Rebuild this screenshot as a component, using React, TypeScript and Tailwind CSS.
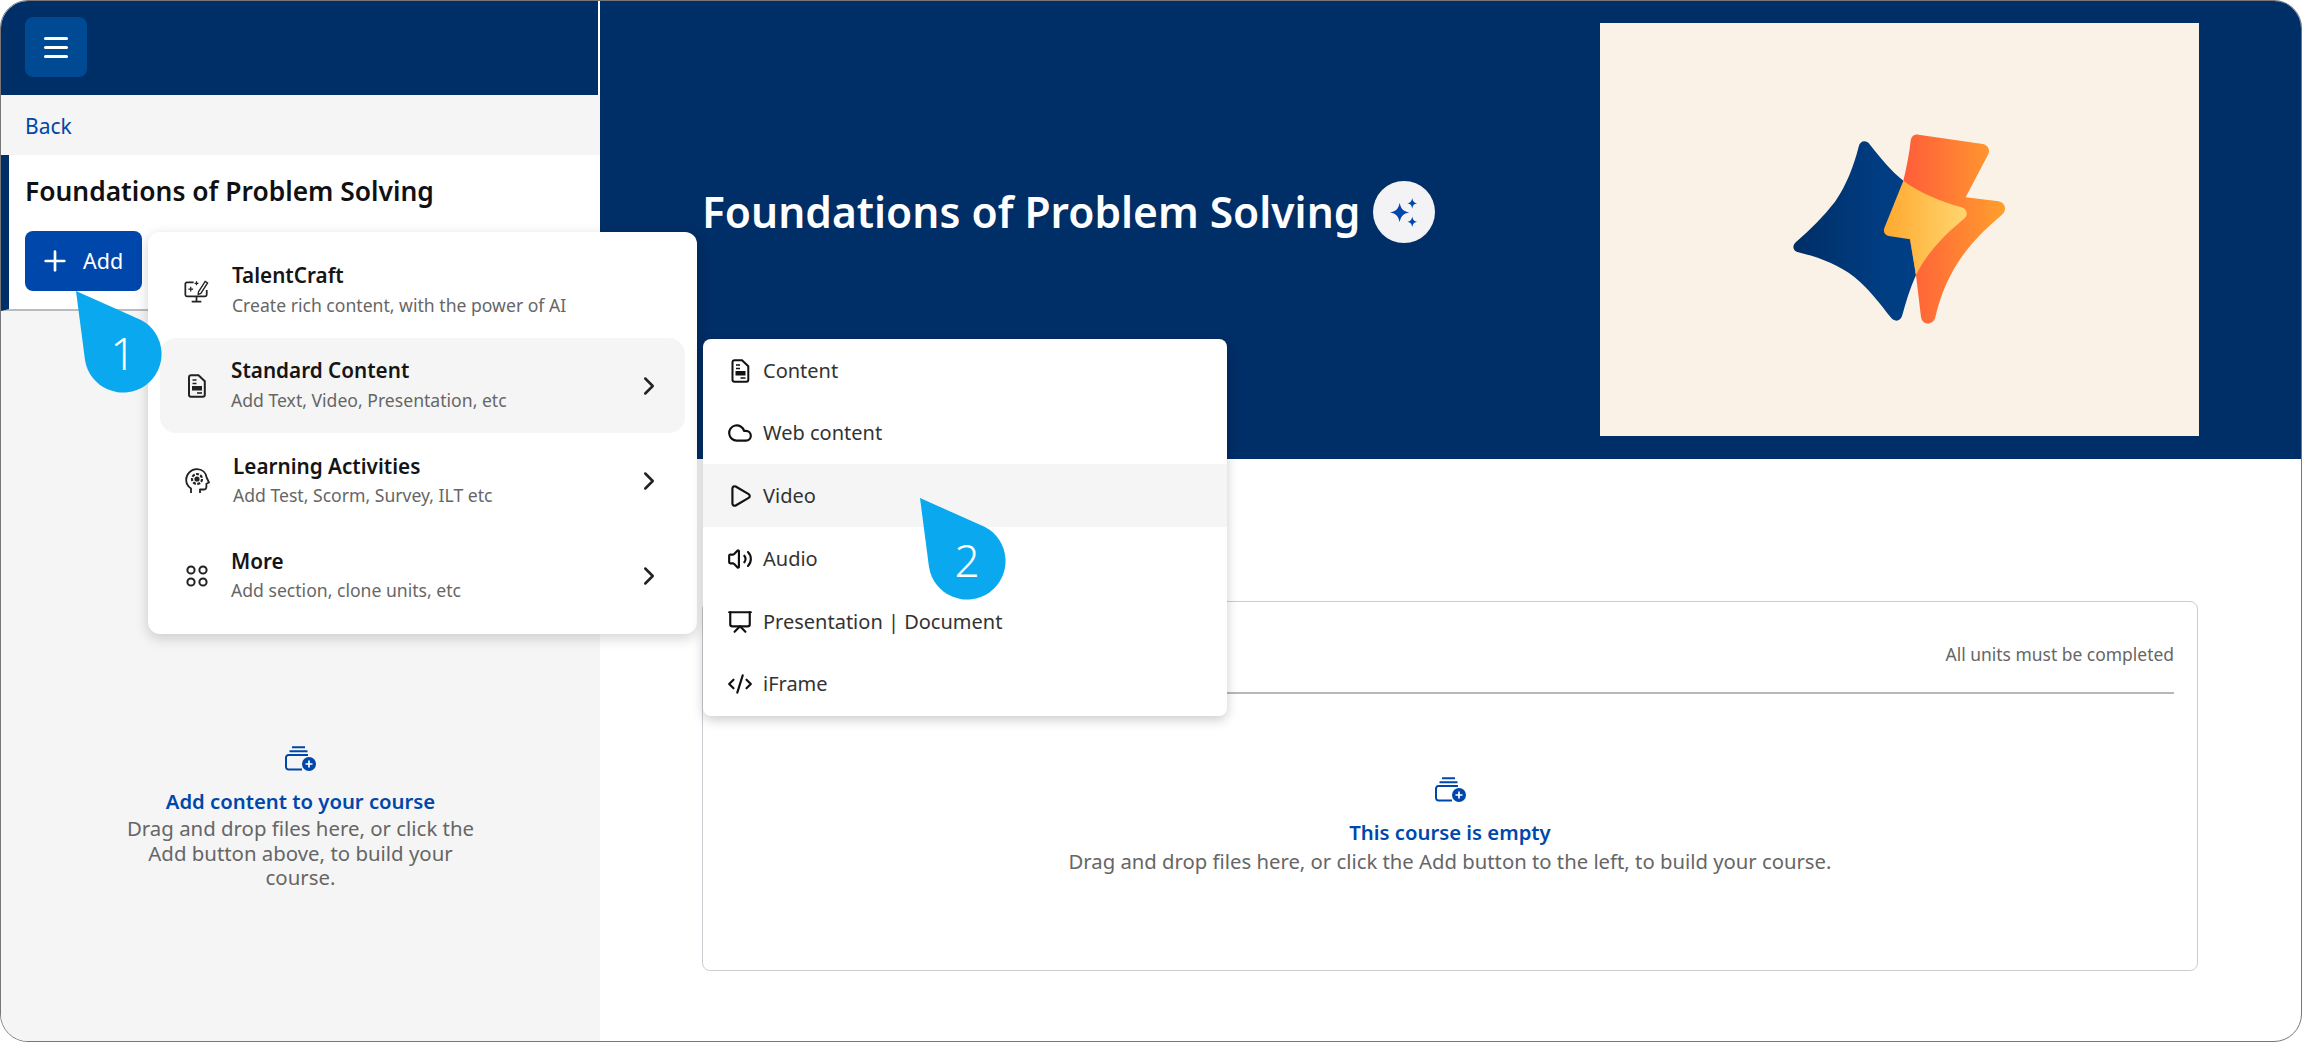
import { ChevronRight, Cloud, CodeXml, Play, Plus, Presentation, Volume2 } from "lucide-react";
import type { ReactNode } from "react";

const font = { fontFamily: '"Noto Sans", "Lato", sans-serif' };

function DocIcon({ className }: { className?: string }) {
  return (
    <svg viewBox="0 0 18 24" className={className} fill="none" stroke="currentColor">
      <path d="M3 1.200h7.500l6.300 6v13.600a2 2 0 0 1-2 2H3a2 2 0 0 1-2-2V3.200a2 2 0 0 1 2-2Z" strokeWidth="2" />
      <path d="M4.500 6h4M4.500 9.500h4" strokeWidth="1.6" />
      <rect x="4" y="12" width="10" height="4.5" fill="currentColor" stroke="none" />
      <path d="M9 19h5" strokeWidth="1.6" />
    </svg>
  );
}

function TalentIcon() {
  return (
    <svg viewBox="0 0 27 25" className="w-[27px] h-[25px]" fill="none" stroke="#222" strokeWidth="1.8">
      <path d="M10 4H3a1.600 1.600 0 0 0-1.600 1.600V17A1.600 1.600 0 0 0 3 18.600h19a1.600 1.600 0 0 0 1.600-1.600v-5" />
      <path d="M8 24h10M13 19v5" />
      <path d="M15 14 22 3l2.500 1.600L17.500 15.600l-2.800 1Z" strokeWidth="1.4" />
      <path d="M7 8.500v5M4.500 11h5M13 3v4M11 5h4" strokeWidth="1.3" />
    </svg>
  );
}

function HeadIcon() {
  return (
    <svg viewBox="0 0 25 26" className="w-[25px] h-[26px]" fill="none" stroke="#222" strokeWidth="1.8">
      <path d="M6 25v-4.500C3 18.500 1.200 15.800 1.200 12A10.600 10.600 0 0 1 12 1.200c5.500 0 9 3.600 9.600 8.300l2.400 5-2.600 1.200V19a2.500 2.500 0 0 1-2.500 2.500H15V25" strokeLinejoin="round" />
      <circle cx="12" cy="11" r="2.6" fill="#222" stroke="none" />
      <circle cx="12" cy="11" r="5" strokeWidth="2.2" strokeDasharray="3 1.4" />
    </svg>
  );
}

function DotsIcon() {
  return (
    <svg viewBox="0 0 22 22" className="w-[22px] h-[22px]" fill="none" stroke="#222" strokeWidth="2">
      <circle cx="5" cy="5" r="3.6" />
      <circle cx="17" cy="5" r="3.6" />
      <circle cx="5" cy="17" r="3.6" />
      <circle cx="17" cy="17" r="3.6" />
    </svg>
  );
}

function StackAddIcon() {
  return (
    <svg viewBox="0 0 31 25" className="w-[31px] h-[25px]" fill="none" stroke="#0047ab" strokeWidth="2">
      <path d="M7 1.200h13M4.500 5.200h18" />
      <path d="M17 23.500H3.500A2.500 2.500 0 0 1 1 21V11.500A2.500 2.500 0 0 1 3.500 9h19.500" />
      <circle cx="24" cy="18" r="7" fill="#0047ab" stroke="none" />
      <path d="M24 14.500v7M20.500 18h7" stroke="#fff" strokeWidth="1.7" />
    </svg>
  );
}

function Sparkle() {
  return (
    <svg viewBox="0 0 32 32" className="w-[31px] h-[31px]" fill="#0047ab">
      <path d="M11 6c1.400 6.500 3.500 8.800 10 10-6.500 1.200-8.600 3.500-10 10-1.400-6.500-3.500-8.800-10-10 6.500-1.200 8.600-3.500 10-10Z" />
      <path d="M24 1c.7 3.600 1.900 4.800 5 5.500-3.100.7-4.300 1.900-5 5.500-.7-3.600-1.900-4.800-5-5.500 3.100-.7 4.300-1.900 5-5.500Z" />
      <path d="M24 20c.7 3.600 1.900 4.800 5 5.500-3.100.7-4.300 1.900-5 5.500-.7-3.600-1.900-4.800-5-5.500 3.100-.7 4.300-1.900 5-5.500Z" />
    </svg>
  );
}

function Logo() {
  return (
    <svg viewBox="0 0 1080 780" className="w-[360px] h-[260px]">
      <defs>
        <linearGradient id="blueG" x1="280" x2="650" y1="400" y2="400" gradientUnits="userSpaceOnUse">
          <stop offset="0" stopColor="#002e66" />
          <stop offset="0.6" stopColor="#003b7e" />
          <stop offset="1" stopColor="#004087" />
        </linearGradient>
        <linearGradient id="orangeG" x1="620" x2="920" y1="300" y2="300" gradientUnits="userSpaceOnUse">
          <stop offset="0" stopColor="#ff5f39" />
          <stop offset="1" stopColor="#ffa12d" />
        </linearGradient>
        <linearGradient id="yellowG" x1="555" x2="800" y1="380" y2="380" gradientUnits="userSpaceOnUse">
          <stop offset="0" stopColor="#ffa92f" />
          <stop offset="1" stopColor="#ffd670" />
        </linearGradient>
      </defs>
      <path d="M476 140C480 122 498 118 510 134C540 172 572 212 610 242L648 525C630 565 618 605 607 645C602 664 584 668 572 652C540 610 505 565 462 530C410 490 350 470 292 456C278 452 276 436 288 426C330 390 370 350 405 305C440 255 462 195 476 140Z" fill="url(#blueG)" />
      <path d="M610 242C620 200 628 160 632 122C634 108 644 102 656 104L848 132C864 135 872 150 864 164L797 292L896 304C916 308 922 330 906 344C850 392 800 440 760 510C735 555 718 600 706 652C700 676 668 678 663 652L648 525L630 418Z" fill="url(#orangeG)" />
      <path d="M610 242C660 280 720 302 784 322C802 328 806 344 792 356C745 395 685 450 648 525L630 418L566 408C554 406 548 394 554 382Z" fill="url(#yellowG)" />
    </svg>
  );
}

function Bubble({ n, className }: { n: string; className: string }) {
  return (
    <div className={`absolute w-[90px] h-[112px] ${className}`}>
      <svg viewBox="0 0 90 112" className="absolute inset-0 w-[90px] h-[112px]">
        <path d="M0 0L65 29A38.500 38.500 0 1 1 9 69Z" fill="#0aa8ee" />
      </svg>
      <span className="absolute left-[17px] top-[36px] w-[60px] text-center text-[44px] leading-[52px] font-light text-white">{n}</span>
    </div>
  );
}

const menuRows: { icon: ReactNode; title: string; sub: string; active?: boolean; chevron?: boolean; pl: string; subTop: string }[] = [
  { icon: <TalentIcon />, title: "TalentCraft", sub: "Create rich content, with the power of AI", pl: "ml-[22px]", subTop: "mt-[1px]" },
  { icon: <DocIcon className="w-[18px] h-[24px] text-[#222]" />, title: "Standard Content", sub: "Add Text, Video, Presentation, etc", active: true, chevron: true, pl: "ml-[21px]", subTop: "mt-[1px]" },
  { icon: <HeadIcon />, title: "Learning Activities", sub: "Add Test, Scorm, Survey, ILT etc", chevron: true, pl: "ml-[23px]", subTop: "mt-0" },
  { icon: <DotsIcon />, title: "More", sub: "Add section, clone units, etc", chevron: true, pl: "ml-[21px]", subTop: "mt-0" },
];

const subRows: { icon: ReactNode; label: string; active?: boolean; h: string }[] = [
  { icon: <DocIcon className="w-[19px] h-[24px] text-[#111]" />, label: "Content", h: "h-[62px]" },
  { icon: <Cloud size={28} strokeWidth={2} className="text-[#111]" />, label: "Web content", h: "h-[62px]" },
  { icon: <Play size={30} strokeWidth={2} className="text-[#111]" />, label: "Video", active: true, h: "h-[63px]" },
  { icon: <Volume2 size={28} strokeWidth={2} className="text-[#111]" />, label: "Audio", h: "h-[63px]" },
  { icon: <Presentation size={28} strokeWidth={2} className="text-[#111]" />, label: "Presentation | Document", h: "h-[63px]" },
  { icon: <CodeXml size={28} strokeWidth={2} className="text-[#111]" />, label: "iFrame", h: "h-[62px]" },
];

export default function App() {
  return (
    <div style={font} className="relative w-[2302px] h-[1042px] overflow-hidden rounded-[28px] border border-[#777] bg-white flex">
      <aside className="w-[599px] shrink-0 flex flex-col bg-[#f5f5f5]">
        <div className="h-[94px] bg-[#002e66] border-r-2 border-white pt-4 pl-6 shrink-0">
          <div className="w-[62px] h-[60px] rounded-lg bg-[#004a93] flex flex-col items-center justify-center gap-[6px]">
            <span className="block w-6 h-[3px] bg-white rounded-sm" />
            <span className="block w-6 h-[3px] bg-white rounded-sm" />
            <span className="block w-6 h-[3px] bg-white rounded-sm" />
          </div>
        </div>
        <div className="h-[60px] pl-6 pt-[17px] text-[21px] leading-[28px] text-[#0047ab] shrink-0">Back</div>
        <div className="h-[156px] bg-white border-l-[8px] border-[#002e66] border-b-2 border-b-[#b8bcc0] pl-[16px] pt-[20px] shrink-0">
          <h2 className="text-[26.400px] leading-[32px] font-semibold text-[#111]">Foundations of Problem Solving</h2>
          <div className="mt-[24px] w-[117px] h-[60px] rounded-lg bg-[#0047ab] flex items-center pl-[14px] gap-[12px] text-white">
            <Plus size={32} strokeWidth={2} />
            <span className="text-[21.500px]">Add</span>
          </div>
        </div>
      </aside>

      <div className="absolute left-0 top-[745px] w-[599px] flex flex-col items-center text-center">
        <StackAddIcon />
        <div className="mt-[16px] text-[20.300px] leading-[28px] font-semibold text-[#0047ab]">Add content to your course</div>
        <p className="mt-[1px] w-[370px] text-[20.400px] leading-[24.500px] text-[#666]">Drag and drop files here, or click the Add button above, to build your course.</p>
      </div>

      <main className="flex-1 flex flex-col min-w-0">
        <section className="h-[458px] shrink-0 bg-[#002e66] flex justify-between pl-[102px] pr-[102px] pt-[22px]">
          <div className="flex items-center h-[378px] gap-[13px]">
            <h1 className="text-[42.500px] leading-[52px] font-semibold text-white whitespace-nowrap">Foundations of Problem Solving</h1>
            <div className="w-[62px] h-[62px] rounded-full bg-[#f3f3f5] flex items-center justify-center">
              <Sparkle />
            </div>
          </div>
          <div className="w-[599px] h-[413px] bg-[#fbf2e7] flex items-center pl-[100px]">
            <Logo />
          </div>
        </section>
        <section className="flex-1 pl-[102px] pr-[103px] pt-[142px]">
          <div className="h-[370px] rounded-lg border border-[#c9cdd1] flex flex-col">
            <div className="mx-[23px] h-[92px] border-b-2 border-[#b4b8bc] flex justify-end items-start pt-[40px] text-[17.450px] leading-[24px] text-[#666] shrink-0">
              All units must be completed
            </div>
            <div className="flex flex-col items-center pt-[83px] text-center">
              <StackAddIcon />
              <div className="mt-[16px] text-[20.300px] leading-[28px] font-semibold text-[#0047ab]">This course is empty</div>
              <p className="mt-[1px] text-[20.300px] leading-[28px] text-[#666]">Drag and drop files here, or click the Add button to the left, to build your course.</p>
            </div>
          </div>
        </section>
      </main>

      <div className="absolute left-[147px] top-[231px] w-[549px] py-[11px] bg-white rounded-xl shadow-[0_4px_14px_rgba(0,0,0,0.18)]">
        {menuRows.map((r) => (
          <div key={r.title} className={`h-[95px] mx-3 rounded-2xl flex items-center pl-6 pr-[21px] ${r.active ? "bg-[#f5f5f5]" : ""}`}>
            <div className="w-[26px] shrink-0 flex justify-center">{r.icon}</div>
            <div className={`flex-1 ${r.pl}`}>
              <div className="text-[20.700px] leading-[29px] font-semibold text-[#151515]">{r.title}</div>
              <div className={`${r.subTop} text-[17.600px] leading-[29px] text-[#666]`}>{r.sub}</div>
            </div>
            {r.chevron && <ChevronRight size={30} strokeWidth={2} className="text-[#222]" />}
          </div>
        ))}
      </div>

      <div className="absolute left-[702px] top-[338px] w-[524px] bg-white rounded-lg shadow-[0_4px_12px_rgba(0,0,0,0.2)] overflow-hidden py-[1px]">
        {subRows.map((r) => (
          <div key={r.label} className={`${r.h} flex items-center pl-6 gap-[10px] ${r.active ? "bg-[#f5f5f5]" : ""}`}>
            <div className="w-[26px] shrink-0 flex justify-center">{r.icon}</div>
            <span className="text-[20px] text-[#333]">{r.label}</span>
          </div>
        ))}
      </div>

      <Bubble n="1" className="left-[75px] top-[290px]" />
      <Bubble n="2" className="left-[919px] top-[497px]" />
    </div>
  );
}
